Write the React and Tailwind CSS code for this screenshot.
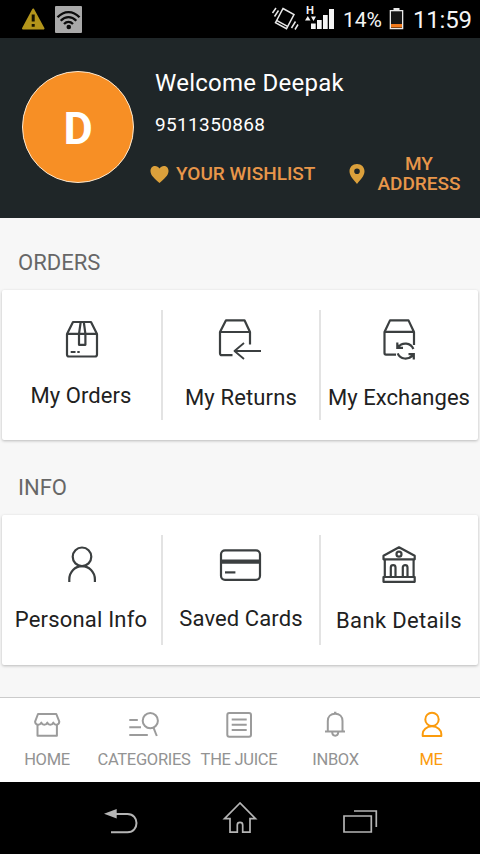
import clsx from 'clsx';

const orderItems = [
  { label: 'My Orders', icon: <OrdersIcon />, width: 'w-[160px]', text: 'mt-[18px] -ml-0.5 tracking-[0.05px]' },
  { label: 'My Returns', icon: <ReturnsIcon />, width: 'w-[158px]', text: 'mt-5 tracking-[0.15px]' },
  { label: 'My Exchanges', icon: <ExchangesIcon />, width: 'w-[158px]', text: 'mt-5 tracking-[0.05px]' },
];

const infoItems = [
  { label: 'Personal Info', icon: <PersonIcon />, width: 'w-[160px]', text: 'mt-[17px] -ml-0.5 tracking-[0.2px]' },
  { label: 'Saved Cards', icon: <CardIcon />, width: 'w-[158px]', text: 'mt-4 tracking-[0.1px]' },
  { label: 'Bank Details', icon: <BankIcon />, width: 'w-[158px]', text: 'mt-[18px] tracking-[0.35px]' },
];

const tabs = [
  { label: 'HOME', icon: <HomeTabIcon />, text: '-ml-0.5 tracking-[-0.3px]' },
  { label: 'CATEGORIES', icon: <CategoriesTabIcon />, text: 'tracking-[-0.3px]' },
  { label: 'THE JUICE', icon: <JuiceTabIcon />, text: '-ml-0.5 tracking-[-0.3px]' },
  { label: 'INBOX', icon: <InboxTabIcon />, text: '-ml-px tracking-[-0.3px]' },
  { label: 'ME', icon: <MeTabIcon />, text: '-ml-0.5 tracking-[-0.3px]', active: true },
];

function LineIcon({ children }) {
  return (
    <svg width="48" height="48" viewBox="0 0 48 48" fill="none" stroke="#3b3f40" strokeWidth="2.2" strokeLinejoin="round" className="shrink-0">
      {children}
    </svg>
  );
}

function OrdersIcon() {
  return (
    <LineIcon>
      <path d="M9 18 15 6h18l6 12v20.5a2 2 0 0 1-2 2H11a2 2 0 0 1-2-2z" />
      <path d="M9 17.8h30M22.7 6 21 17.8v11h6.4v-11L25.8 6" />
      <path d="M12.7 36h4.8M19.3 36h2.4" />
    </LineIcon>
  );
}

function ReturnsIcon() {
  return (
    <LineIcon>
      <path d="M15.5 39.2H5a2 2 0 0 1-2-2V16L9 4.3h18.5L33 16v12.5M3 16h30" />
      <path d="M44 35H17.5M27 27l-9.5 8 9.5 8" strokeWidth="1.8" />
    </LineIcon>
  );
}

function ExchangesIcon() {
  return (
    <LineIcon>
      <path d="M21 38.6H11a1.5 1.5 0 0 1-1.5-1.5V16L15 4.4h18.5L39 16v13M9.500 15.800H39" />
      <path d="M23 31.3c4-5.5 12.8-5 15.4 1.7M22.7 37.4c2.4 6.3 10.8 6.8 15.3 1.7" />
      <path d="M22.3 26.5v5.3H28M33.5 38.2h5.3v5.3" strokeLinejoin="miter" />
      <path d="M22.3 27.5v4.300h4.300zM38.800 42.500v-4.300h-4.300z" fill="#3b3f40" stroke="none" />
    </LineIcon>
  );
}

function PersonIcon() {
  return (
    <LineIcon>
      <circle cx="24" cy="15.8" r="9.3" />
      <path d="M11.3 41v-2.5C11.3 31 17 25.2 24 25.2S36.9 31 36.9 38.5V41" />
    </LineIcon>
  );
}

function CardIcon() {
  return (
    <LineIcon>
      <rect x="4" y="9.3" width="39" height="29.5" rx="4" />
      <path d="M4 20.6h39" strokeWidth="4.200" />
      <path d="M8 31.4h10.4" />
    </LineIcon>
  );
}

function BankIcon() {
  return (
    <LineIcon>
      <path d="M8.5 18.3v-3.5L24 6.3l15.7 8.5v3.5z" />
      <circle cx="24" cy="13.2" r="2.5" />
      <path d="M9.8 18.3V36M38.6 18.3V36" />
      <path d="M15.8 36v-9.5a2.35 2.35 0 0 1 4.7 0V36M27.8 36v-9.5a2.35 2.35 0 0 1 4.7 0V36" />
      <path d="M8.5 36h31.2v4.8H8.5z" />
    </LineIcon>
  );
}

function TabIcon({ children, color = '#9b9b9b' }) {
  return (
    <svg width="48" height="32" viewBox="0 0 48 32" fill="none" stroke={color} strokeWidth="2" strokeLinejoin="round">
      {children}
    </svg>
  );
}

function HomeTabIcon() {
  return (
    <TabIcon>
      <path d="M14 5h18.300l3 7.600c0 3.600-4.500 4.300-6 1-1.200 3-4.800 3-6 0-1.200 3-4.800 3-6 0-1.700 3.300-6.200 2.600-6.200-1z" />
      <path d="M13.500 15.500v11.200h19.400V15.500" />
    </TabIcon>
  );
}

function CategoriesTabIcon() {
  return (
    <TabIcon>
      <path d="M9.300 11h8.500M9.300 18.300H21M9.300 26h18.500" />
      <circle cx="30.300" cy="11.700" r="7.600" />
      <path d="m33.600 18.800 3.200 8.200" />
    </TabIcon>
  );
}

function JuiceTabIcon() {
  return (
    <TabIcon>
      <rect x="11.300" y="4" width="23.700" height="23.700" rx="2" />
      <path d="M15.700 10.400h15M15.700 15.700h15M15.700 21h15" />
    </TabIcon>
  );
}

function InboxTabIcon() {
  return (
    <TabIcon>
      <path d="M13 22.400h20M15.800 22V12c0-4.500 3-7.300 7.400-7.300s7.300 2.800 7.300 7.300v10" />
      <path d="M22 3.800h2.400M20.200 22.800c0 5.200 6 5.200 6 0" />
    </TabIcon>
  );
}

function MeTabIcon() {
  return (
    <TabIcon color="#fb9b0c">
      <circle cx="24" cy="10.400" r="6.700" />
      <path d="M14.700 27v-2c0-4 3.700-7.700 9.300-7.700s9.300 3.700 9.300 7.700v2z" />
    </TabIcon>
  );
}

function StatusBar() {
  return (
    <div className="flex h-[38px] items-center bg-black text-[#f4f4f4]">
      <svg width="24" height="24" viewBox="0 0 24 24" className="ml-[21px]">
        <path d="M12.200 2.500 22.500 21.500H2z" fill="#b3951b" stroke="#b3951b" strokeWidth="2" strokeLinejoin="round" />
        <path d="M12.200 7.500v7M12.200 17v2.700" stroke="#171300" strokeWidth="3" />
      </svg>
      <svg width="27" height="27" viewBox="0 0 27 27" className="ml-[10px]">
        <rect width="27" height="27" rx="1" fill="#a9a9a9" />
        <path
          d="M2.500 11.300c6.500-7 15.500-7 22 0M5.700 14.800c4.800-5 10.800-5 15.600 0M9 18c2.800-2.800 6.200-2.800 9 0"
          fill="none"
          stroke="#0b0b0b"
          strokeWidth="2.300"
        />
        <circle cx="13.800" cy="21" r="2.300" fill="#0b0b0b" />
      </svg>

      <svg width="28" height="26" viewBox="0 0 28 26" className="ml-[189px]" fill="none" stroke="#e8e8e8" strokeWidth="1.500">
        <path d="m12 2.500 11 6-7.500 14.200-11-6zM5.500 14.300l11 6" />
        <path d="M1.500 7 5 2M3.500 10.500 7.500 4.500M20.500 22l4-6.500M24 23.500l3-5" />
      </svg>
      <div className="relative ml-[6px] h-[26px] w-[30px]">
        <span className="absolute top-[-1px] left-[1px] font-['Liberation_Sans'] text-[11px] leading-[10px] font-bold">H</span>
        <svg width="30" height="26" viewBox="0 0 30 26" fill="#f4f4f4">
          <path d="M0 14.500 2.800 10l2.700 4.500zM6 10.500h5L8.500 15zM6 17.500h4.700V23H6zM12 14h4.700v9H12zM18 9h4.700v14H18zM24 3h5v20h-5z" />
        </svg>
      </div>
      <span className="mt-px ml-[8px] text-[21px] leading-[26px]">14%</span>
      <svg width="15" height="22" viewBox="0 0 15 22" className="ml-[7px]">
        <path d="M4.500 0h6v2h3.800v19.300H.700V2h3.800z" fill="#e8e8e8" />
        <path d="M2 3.300h11V20H2z" fill="#151515" />
        <path d="M2 16h11v3.500H2z" fill="#f27a1c" />
      </svg>
      <span className="mt-0.5 ml-[9px] text-[24px] leading-[30px] tracking-[-0.2px]">11:59</span>
    </div>
  );
}

function ProfileHeader() {
  return (
    <header className="flex h-[180px] bg-[#1f2628]">
      <div className="mt-[33px] ml-[22px] flex h-28 w-28 shrink-0 items-center justify-center rounded-full border border-[#fbe8d0] bg-[#f78f25] pt-[3px] text-[45px] font-bold text-white">
        D
      </div>
      <div className="flex flex-col">
        <h1 className="mt-[29px] ml-[21px] text-[24px] leading-8 tracking-[0.25px] text-white">Welcome Deepak</h1>
        <p className="mt-[14px] ml-[21px] text-[19px] leading-6 tracking-[0.35px] text-white">9511350868</p>
        <div className="mt-[17px] flex items-center text-[19px] leading-5 font-medium text-[#e8964a]">
          <svg width="19" height="19" viewBox="0 0 20 20" className="ml-4" fill="#dba03b">
            <path d="M10 19C5 14.500.500 11 .500 6.300.500 3 2.700 1 5.300 1 7.300 1 9 2 10 3.600 11 2 12.700 1 14.700 1c2.600 0 4.800 2 4.800 5.300C19.500 11 15 14.500 10 19z" />
          </svg>
          <span className="ml-[7px] w-[150px] whitespace-nowrap">YOUR WISHLIST</span>
          <svg width="16" height="20" viewBox="0 0 16 20" className="ml-[23px]" fill="#dba03b" fillRule="evenodd">
            <path d="M8 0C3.500 0 .500 3.200.500 7.300.500 12 4.500 15.500 8 20c3.500-4.500 7.500-8 7.500-12.700C15.500 3.200 12.500 0 8 0zm0 4.500a2.800 2.800 0 1 1 0 5.600 2.800 2.800 0 0 1 0-5.600z" />
          </svg>
          <span className="ml-[11px] w-[86px] text-center">MY ADDRESS</span>
        </div>
      </div>
    </header>
  );
}

function Section({ title, items }) {
  return (
    <section>
      <h2 className="flex h-[72px] items-end pb-3 pl-[18px] text-[22px] leading-[30px] text-[#676767]">{title}</h2>
      <div className="mx-0.5 flex h-[150px] rounded-xs bg-white shadow-[0_1px_3px_rgba(0,0,0,0.250)]">
        {items.map((item, index) => (
          <div key={item.label} className="flex">
            {index > 0 && <div className="-mx-px my-5 w-0.5 bg-[#e3e3e3]" />}
            <div className={clsx('flex flex-col items-center pt-[26px]', item.width)}>
              {item.icon}
              <span className={clsx('text-[22px] leading-7 whitespace-nowrap text-[#212121]', item.text)}>{item.label}</span>
            </div>
          </div>
        ))}
      </div>
    </section>
  );
}

function TabBar() {
  return (
    <nav className="mt-auto grid h-[85px] grid-cols-5 border-t border-[#cbcbcb] bg-white">
      {tabs.map((tab) => (
        <div key={tab.label} className="flex flex-col items-center pt-[11px]">
          {tab.icon}
          <span
            className={clsx(
              'mt-[9px] text-[16.5px] leading-5 whitespace-nowrap',
              tab.active ? 'text-[#fb9b0c]' : 'text-[#939393]',
              tab.text
            )}
          >
            {tab.label}
          </span>
        </div>
      ))}
    </nav>
  );
}

function SystemNav() {
  return (
    <div className="flex h-[72px] justify-center gap-[72px] bg-black pt-3">
      <svg width="48" height="48" viewBox="0 0 48 48" fill="none" stroke="#b5b5b5" strokeWidth="2">
        <path d="M20 20h11.500c12 0 12 18.200 0 18.200H15" />
        <path d="m8 19.700 12.700-4.700v9.500z" fill="#b5b5b5" stroke="none" />
      </svg>
      <svg width="48" height="48" viewBox="0 0 48 48" fill="none" stroke="#b5b5b5" strokeWidth="1.700">
        <path d="M24 9 8.500 24.700H14v13.500h7.300V31c0-3.500 5.400-3.500 5.400 0v7.200H34V24.700h5.500z" />
      </svg>
      <svg width="48" height="48" viewBox="0 0 48 48" fill="none" stroke="#b5b5b5" strokeWidth="1.700">
        <path d="M8 22h27.300v16H8zM18 17h22.300v16" />
      </svg>
    </div>
  );
}

export default function App() {
  return (
    <div className="flex h-[854px] w-[480px] flex-col overflow-hidden bg-[#f7f7f7] font-[Roboto,sans-serif]">
      <StatusBar />
      <ProfileHeader />
      <Section title="ORDERS" items={orderItems} />
      <div className="h-[3px]" />
      <Section title="INFO" items={infoItems} />
      <TabBar />
      <SystemNav />
    </div>
  );
}
